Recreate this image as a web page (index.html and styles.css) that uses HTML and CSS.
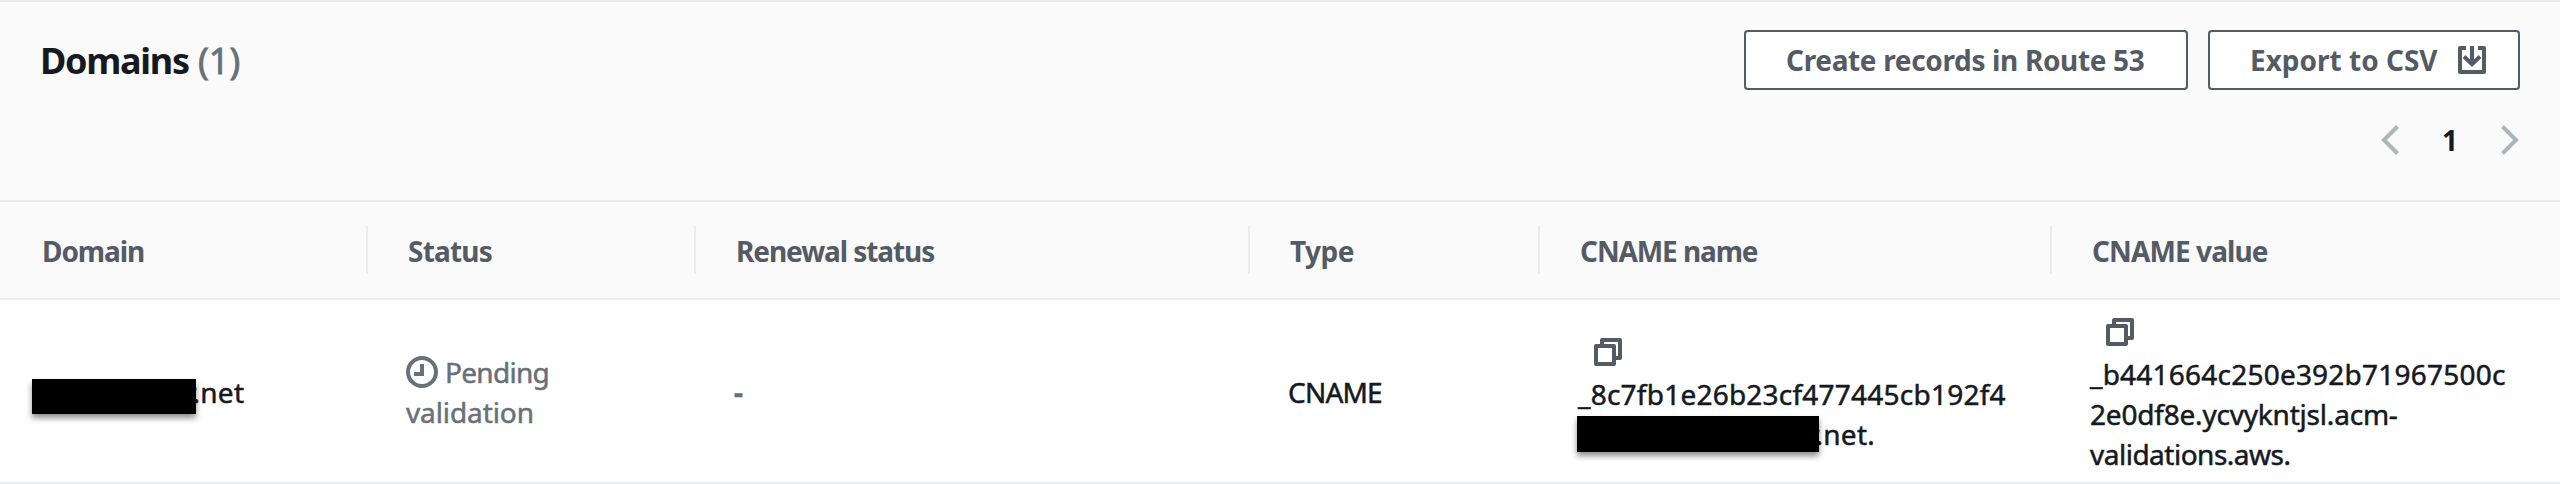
FILE: index.html
```html
<!DOCTYPE html>
<html lang="en">
<head>
<meta charset="utf-8">
<title>Domains</title>
<link rel="stylesheet" href="styles.css">
</head>
<body>
<section class="panel">
  <header class="panel-header">
    <div class="header-row">
      <h2 class="title"><span class="title-name">Domains</span> <span class="count">(1)</span></h2>
      <div class="actions">
        <button class="btn btn-route"><span>Create records in Route 53</span></button>
        <button class="btn btn-export"><span>Export to CSV</span>
          <svg class="icon-28" viewBox="0 0 28 28" fill="none" stroke="currentColor" stroke-width="4"><path d="M8 2H2V26H26V2H20" stroke-linejoin="round"/><path d="M14 0V17M6 10.5L14 18.2L22 10.5"/></svg>
        </button>
      </div>
    </div>
    <nav class="pagination">
      <svg class="chevron" viewBox="0 0 18 30"><path d="M16.5 1.5L3 15L16.5 28.5"/></svg>
      <span class="page">1</span>
      <svg class="chevron" viewBox="0 0 18 30"><path d="M1.5 1.5L15 15L1.5 28.5"/></svg>
    </nav>
  </header>
  <div class="grid head">
    <div class="th h-domain">Domain</div>
    <div class="th h-status">Status</div>
    <div class="th h-renewal">Renewal status</div>
    <div class="th h-type">Type</div>
    <div class="th h-name">CNAME name</div>
    <div class="th h-value">CNAME value</div>
  </div>
  <div class="grid row">
    <div class="td td-domain"><span class="redacted redacted-domain"></span><span class="tail">r.net</span></div>
    <div class="td td-status">
      <div class="line"><svg class="clock" viewBox="0 0 32 32" fill="none" stroke="currentColor" stroke-width="4"><circle cx="16" cy="16" r="14"/><path d="M16 8V18H8"/></svg><span class="t-pending">Pending</span></div>
      <div class="line t-validation">validation</div>
    </div>
    <div class="td td-renewal">-</div>
    <div class="td t-cname">CNAME</div>
    <div class="td td-name">
      <svg class="copy" viewBox="0 0 28 28" fill="none" stroke="currentColor" stroke-width="4" stroke-linejoin="round"><path d="M2 8H20V26H2Z"/><path d="M8 8V2H26V20H20"/></svg>
      <div class="line t-name">_8c7fb1e26b23cf477445cb192f4</div>
      <div class="line name-tail"><span class="redacted redacted-name"></span><span class="tail">r.net.</span></div>
    </div>
    <div class="td td-value">
      <svg class="copy" viewBox="0 0 28 28" fill="none" stroke="currentColor" stroke-width="4" stroke-linejoin="round"><path d="M2 8H20V26H2Z"/><path d="M8 8V2H26V20H20"/></svg>
      <div class="line t-v1">_b441664c250e392b71967500c</div>
      <div class="line t-v2">2e0df8e.ycvykntjsl.acm-</div>
      <div class="line t-v3">validations.aws.</div>
    </div>
  </div>
</section>
</body>
</html>
```
FILE: styles.css
```css
* { box-sizing: border-box; }
body { margin: 0; background: #fff; color: #16191f; font: 28px/40px "Noto Sans", "Open Sans", sans-serif; }
svg { display: block; flex: none; }

.panel { width: 2560px; height: 484px; border-top: 2px solid #eaeded; border-bottom: 2px solid #eaeded; overflow: hidden; }
.panel-header { height: 198px; padding: 28px 40px 0; background: #fafafa; }
.header-row { display: flex; justify-content: space-between; height: 60px; }
.title { margin: 0; font-size: 36px; line-height: 62px; font-weight: 700; white-space: nowrap; }
.title-name { letter-spacing: -1.3px; }
.count { font-weight: 400; color: #687078; -webkit-text-stroke: .8px currentColor; }

.actions { display: flex; gap: 20px; }
.btn { display: flex; align-items: center; height: 60px; padding: 0 0 0 40px; border: 2px solid #545b64; border-radius: 4px; background: #fff; color: #545b64; font: 700 28px/40px "Noto Sans", sans-serif; white-space: nowrap; }
.btn-route { width: 444px; letter-spacing: -.34px; }
.btn-export { width: 312px; justify-content: space-between; padding-right: 32px; }
.icon-28 { width: 28px; height: 28px; }

.pagination { display: flex; justify-content: space-between; align-items: center; width: 138px; height: 40px; margin: 30px 1px 0 auto; }
.page { font-weight: 700; }
.chevron { width: 18px; height: 30px; fill: none; stroke: #aab7b8; stroke-width: 4; }

.grid { display: grid; grid-template-columns: 368px 328px 554px 290px 512px 508px; }
.head { height: 100px; padding-top: 24px; background: #fafafa; border-top: 2px solid #eaeded; border-bottom: 2px solid #eaeded; color: #545b64; font-weight: 700; }
.th { height: 48px; padding-left: 40px; line-height: 50px; border-right: 2px solid #eaeded; white-space: nowrap; }
.th:last-child { border-right: 0; }
.h-domain { padding-left: 42px; letter-spacing: -1.1px; }
.h-status { letter-spacing: -.8px; }
.h-renewal { letter-spacing: -1.07px; }
.h-type { letter-spacing: -.5px; }
.h-name { letter-spacing: -1.1px; }
.h-value { letter-spacing: -.9px; }

.row { height: 182px; align-items: center; -webkit-text-stroke: .5px currentColor; }
.td { padding: 2px 0 0 38px; white-space: nowrap; }
.line { height: 40px; }
.redacted { position: relative; display: block; flex: none; background: #000; box-shadow: 0 4px 6px rgba(0, 0, 0, .45); }
.tail { flex: none; letter-spacing: .3px; }
.td-domain { display: flex; align-items: center; padding-left: 32px; }
.redacted-domain { width: 164px; height: 35px; margin-top: 8px; margin-right: -11px; }
.td-status { color: #687078; }
.td-status .line { display: flex; align-items: center; gap: 7px; }
.clock { width: 32px; height: 32px; }
.t-pending { letter-spacing: -.7px; }
.t-validation { letter-spacing: -.1px; }
.t-cname { letter-spacing: -.8px; }
.td-renewal { color: #687078; font-weight: 700; }
.copy { width: 28px; height: 28px; margin: 0 0 8px 16px; color: #545b64; }
.td-name { align-self: start; padding-top: 38px; }
.td-value { align-self: start; padding-top: 18px; }
.t-name { letter-spacing: .23px; }
.t-v1 { letter-spacing: .22px; }
.t-v2 { letter-spacing: -.2px; }
.t-v3 { letter-spacing: -.5px; }
.name-tail { display: flex; align-items: center; margin-left: -1px; }
.redacted-name { width: 242px; height: 36px; margin-right: -11px; }
```
